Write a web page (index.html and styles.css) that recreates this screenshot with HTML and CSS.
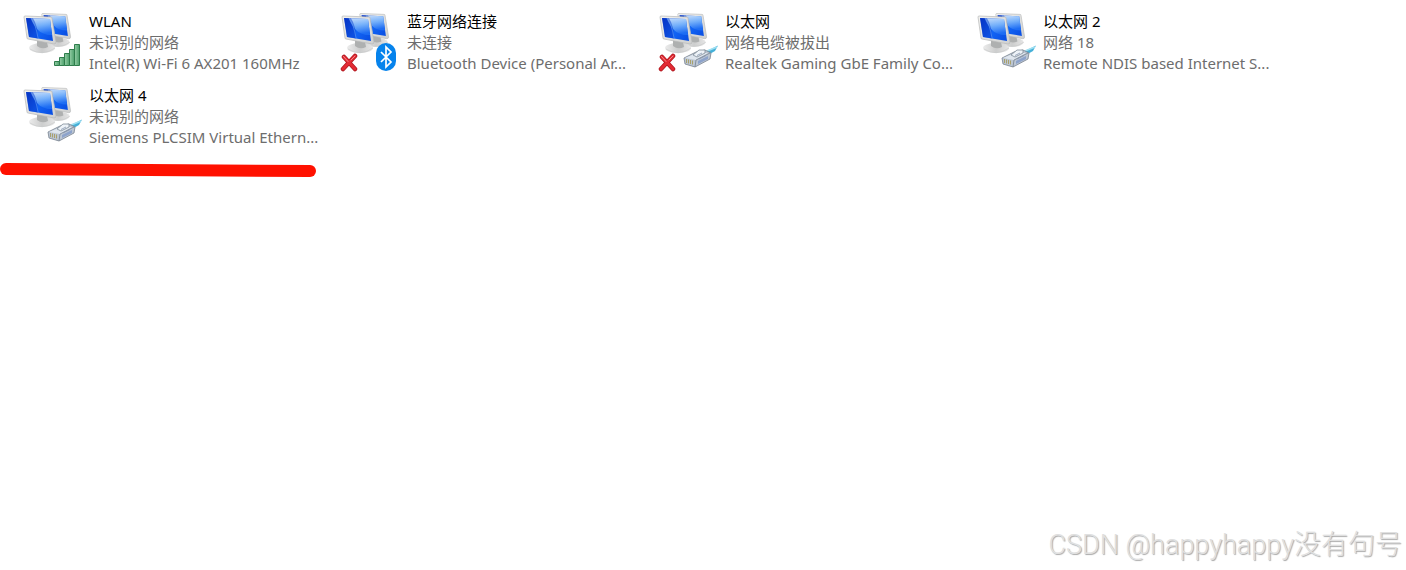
FILE: index.html
```html
<!DOCTYPE html>
<html lang="zh-CN">
<head>
  <meta charset="UTF-8" />
  <meta name="viewport" content="width=device-width, initial-scale=1" />
  <title>网络连接</title>
  <link rel="stylesheet" href="styles.css">
</head>

<body>
  <!-- Icon parts shared by the connections -->
  <svg class="defs" aria-hidden="true">
    <defs>
      <linearGradient id="screen" x1="0" y1="0.2" x2="1" y2="0.8">
        <stop offset="0" stop-color="#0636c4" />
        <stop offset="0.5" stop-color="#1266f6" />
        <stop offset="1" stop-color="#0a50e4" />
      </linearGradient>
      <linearGradient id="shine" x1="0" y1="0" x2="0.2" y2="1">
        <stop offset="0" stop-color="#dceefe" />
        <stop offset="0.5" stop-color="#7fb8fb" />
        <stop offset="1" stop-color="#1f6ff4" />
      </linearGradient>
      <linearGradient id="frame" x1="0" y1="0" x2="1" y2="1">
        <stop offset="0" stop-color="#f2f2f0" />
        <stop offset="1" stop-color="#cfd0d0" />
      </linearGradient>
      <linearGradient id="stand" x1="0" y1="0" x2="1" y2="0">
        <stop offset="0" stop-color="#ececec" />
        <stop offset="0.5" stop-color="#cccdcd" />
        <stop offset="1" stop-color="#e6e6e6" />
      </linearGradient>
      <linearGradient id="bar" x1="0" y1="0" x2="1" y2="0">
        <stop offset="0" stop-color="#95cfa6" />
        <stop offset="1" stop-color="#4a9d69" />
      </linearGradient>

      <g id="monitor">
        <ellipse cx="20" cy="37" rx="13" ry="5" fill="url(#stand)" />
        <path d="M8 38 Q20 46 33 37" fill="none" stroke="#c6c7c7" stroke-width="0.6" />
        <path d="M15 29 L25 31 L26 36 Q20 39 15 35 Z" fill="#aeb0b0" />
        <path d="M2 6 Q2 5 3 5 L29 6 Q30 6 30 7 L34 31 Q34 33 32 33 L6 28 Q5 28 5 27 Z" fill="url(#frame)" stroke="#b6b8b8" stroke-width="0.7" />
        <path d="M4 7 L28 8 L31 30 L7 26 Z" fill="url(#screen)" />
        <path d="M9 7.2 L28 8 L30 24 Q20 24 15 18 Q10 12 9 7.2 Z" fill="url(#shine)" opacity="0.9" />
        <path d="M4 7 L11 7.3 Q16 15 16 27.6 L7 26 Z" fill="#0839cc" opacity="0.5" />
        <path d="M9 7.2 Q14 14 16 27" fill="none" stroke="#63a5f8" stroke-width="0.6" />
      </g>

      <g id="computers">
        <use href="#monitor" transform="translate(18 -2) scale(0.9)" />
        <use href="#monitor" />
      </g>

      <g id="signal" fill="url(#bar)" stroke="#2f7d4c" stroke-width="1">
        <path d="M32.5 50.5h5v4h-5z" />
        <path d="M37.5 46.5h5v8h-5z" />
        <path d="M42.5 42.5h5v12h-5z" />
        <path d="M47.5 38.5h5v16h-5z" />
        <path d="M52.5 33.5h5v21h-5z" />
      </g>

      <g id="cable">
        <path d="M46 41 L53 38 L60 34.5 L57 40 L50 44 Z" fill="#45b0d8" />
        <path d="M49 40 L59 36" stroke="#9fe0f2" stroke-width="1.6" />
        <path d="M26 47 L38 41 L47 39 L53 42 L52 48 L37 56 L27 53 Z" fill="#bcc6d3" stroke="#78838f" stroke-width="0.8" />
        <path d="M27 47 L39 42 L50 42 L38 49 Z" fill="#dfe6ee" />
        <path d="M35 44 L41 39 L47 39 L47 42 L39 46 Z" fill="#eef3f8" stroke="#7f8b98" stroke-width="0.8" />
        <path d="M38 49 L52 42 M38 49 L37 56" fill="none" stroke="#78838f" stroke-width="0.8" />
        <path d="M40 50 L50 45 L50 48 L40 53 Z" fill="#8da3cb" />
        <path d="M39 44.5 L44 42 M41 48 L48 44.5" stroke="#8494ae" stroke-width="0.8" />
        <path d="M28.5 48v4M30.5 48.5v4M32.5 49v4M34.5 49.5v4" stroke="#a9a16c" stroke-width="1" />
      </g>

      <g id="cross" stroke-linecap="round" fill="none">
        <path d="M4 46 L15 58 M15 45 L3 58" stroke="#b01820" stroke-width="4.5" />
        <path d="M4 46 L15 58 M15 45 L3 58" stroke="#e32b34" stroke-width="3" />
        <path d="M3.5 45.5 L8 50.5 M15 45 L11 49" stroke="#f58a8c" stroke-width="1" />
      </g>

      <g id="bluetooth">
        <rect x="36" y="32" width="20" height="28" rx="10" fill="#0683ec" />
        <path d="M41 41 L51 51 L46 56 V36 L51 41 L41 51" fill="none" stroke="#fff" stroke-width="1.7" />
      </g>
    </defs>
  </svg>

  <ul class="connections">
    <li class="connection">
      <svg class="icon" viewBox="0 0 60 63" aria-hidden="true">
        <use href="#computers" />
        <use href="#signal" />
      </svg>
      <div class="info">
        <p class="name">WLAN</p>
        <p>未识别的网络</p>
        <p>Intel(R) Wi-Fi 6 AX201 160MHz</p>
      </div>
    </li>
    <li class="connection">
      <svg class="icon" viewBox="0 0 60 63" aria-hidden="true">
        <use href="#computers" />
        <use href="#cross" />
        <use href="#bluetooth" />
      </svg>
      <div class="info">
        <p class="name">蓝牙网络连接</p>
        <p>未连接</p>
        <p>Bluetooth Device (Personal Ar...</p>
      </div>
    </li>
    <li class="connection">
      <svg class="icon" viewBox="0 0 60 63" aria-hidden="true">
        <use href="#computers" />
        <use href="#cross" />
        <use href="#cable" />
      </svg>
      <div class="info">
        <p class="name">以太网</p>
        <p>网络电缆被拔出</p>
        <p>Realtek Gaming GbE Family Co...</p>
      </div>
    </li>
    <li class="connection">
      <svg class="icon" viewBox="0 0 60 63" aria-hidden="true">
        <use href="#computers" />
        <use href="#cable" />
      </svg>
      <div class="info">
        <p class="name">以太网 2</p>
        <p>网络 18</p>
        <p>Remote NDIS based Internet S...</p>
      </div>
    </li>
    <li class="connection">
      <svg class="icon" viewBox="0 0 60 63" aria-hidden="true">
        <use href="#computers" />
        <use href="#cable" />
      </svg>
      <div class="info">
        <p class="name">以太网 4</p>
        <p>未识别的网络</p>
        <p>Siemens PLCSIM Virtual Ethern...</p>
      </div>
    </li>
  </ul>

  <svg class="underline" viewBox="0 0 316 14" aria-hidden="true">
    <path d="M6 6 L310 8" stroke="#ff1100" stroke-width="12" stroke-linecap="round" />
  </svg>

  <p class="watermark">CSDN @happyhappy没有句号</p>
</body>
</html>
```

FILE: styles.css
```css
body {
  margin: 0;
  min-height: 100vh;
  display: flex;
  flex-direction: column;
  background-color: #fff;
  color: #6d6d6d;
  font-family: "Noto Sans", "Noto Sans CJK SC", sans-serif;
  font-size: 15px;
  line-height: 21px;
}

p {
  margin: 0;
}

.defs {
  position: absolute;
  width: 0;
  height: 0;
}

.connections {
  display: grid;
  grid-template-columns: repeat(auto-fill, 318px);
  row-gap: 11px;
  margin: 0;
  padding: 11px 22px 15px;
  list-style: none;
}

.connection {
  display: flex;
  gap: 7px;
}

.icon {
  flex: none;
  width: 60px;
  height: 63px;
}

.info {
  white-space: nowrap;
}

.info p {
  height: 21px;
}

.name {
  color: #000;
}

.underline {
  width: 316px;
  height: 14px;
}

.watermark {
  margin-top: auto;
  padding: 0 4px 8px;
  text-align: right;
  font-family: Roboto, "Noto Sans CJK SC", sans-serif;
  font-size: 27px;
  font-weight: 300;
  line-height: 34px;
  color: #e0e0e0;
  text-shadow: 1px 1px 1px #a8a8a8;
}
```
